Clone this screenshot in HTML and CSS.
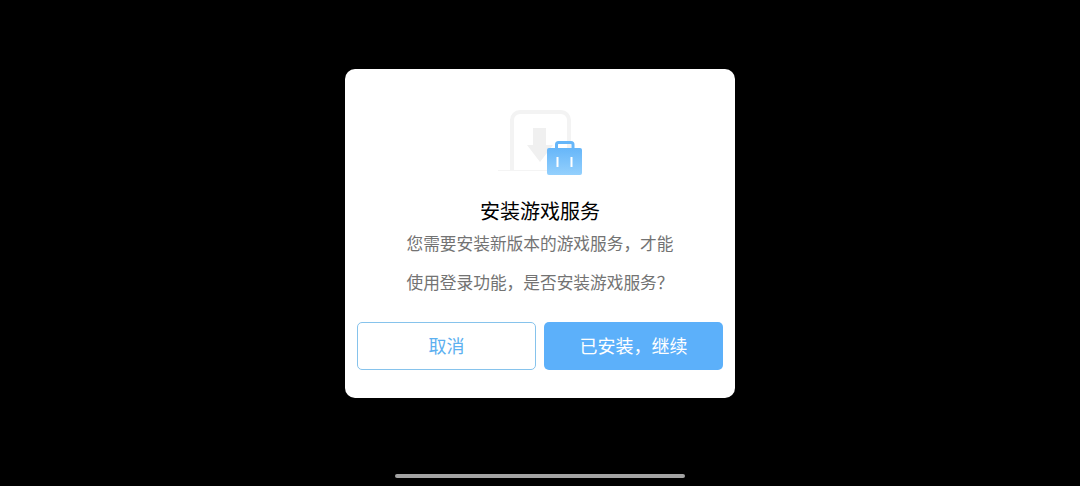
FILE: index.html
```html
<!DOCTYPE html>
<html lang="zh-CN">
<head>
  <meta charset="UTF-8" />
  <title>安装游戏服务</title>
  <link rel="stylesheet" href="styles.css">
</head>
<body>

<div class="dialog">
  <svg class="dialog-icon" width="90" height="66" viewBox="0 0 90 66">
    <defs>
      <linearGradient id="bag-fill" x1="0" y1="0" x2="0" y2="1">
        <stop offset="0" stop-color="#66b6f9" />
        <stop offset="1" stop-color="#94d0fd" />
      </linearGradient>
    </defs>
    <!-- планшет -->
    <path d="M17 60V10a8 8 0 0 1 8-8h41a8 8 0 0 1 8 8v32" fill="none" stroke="#f3f3f3" stroke-width="4" />
    <path d="M3 60.500H53" stroke="#f4f4f4" stroke-width="1" />
    <!-- стрелка -->
    <path d="M38 18H51V35H58L45 52L32 35H38Z" fill="#f0f0f0" />
    <!-- сумка -->
    <path d="M61.500 38V34.500a2 2 0 0 1 2-2H76a2 2 0 0 1 2 2V38" fill="none" stroke="#66b6f9" stroke-width="3" />
    <rect x="52" y="38" width="35" height="27" rx="2" fill="url(#bag-fill)" />
    <path d="M62.500 47V57M76.500 47V57" stroke="#fff" stroke-width="2" />
  </svg>

  <h1 class="dialog-title">安装游戏服务</h1>
  <p class="dialog-text">您需要安装新版本的游戏服务，才能</p>
  <p class="dialog-text">使用登录功能，是否安装游戏服务？</p>

  <div class="dialog-buttons">
    <button class="btn btn-cancel">取消</button>
    <button class="btn btn-confirm">已安装，继续</button>
  </div>
</div>

<div class="home-bar"></div>

</body>
</html>
```

FILE: styles.css
```css
html, body {
  height: 100%;
}

body {
  margin: 0;
  background: #000;
  font-family: "Noto Sans CJK SC", "Noto Sans", sans-serif;
  display: flex;
  flex-direction: column;
  align-items: center;
  overflow: hidden;
}

.dialog {
  box-sizing: border-box;
  width: 390px;
  height: 329px;
  margin-top: 69px;
  padding: 41px 12px 0;
  background: #fff;
  border-radius: 10px;
  display: flex;
  flex-direction: column;
  align-items: center;
}

.dialog-icon {
  display: block;
  flex-shrink: 0;
}

.dialog-title {
  margin: 20px 0 0;
  font-size: 20px;
  line-height: 30px;
  font-weight: 400;
  color: #000;
}

.dialog-text {
  margin: 0;
  height: 39px;
  font-size: 16.7px;
  line-height: 39px;
  color: #737373;
  white-space: nowrap;
}

.dialog-title + .dialog-text {
  margin-top: -2px;
}

.dialog-buttons {
  align-self: stretch;
  display: grid;
  grid-template-columns: 1fr 1fr;
  gap: 8px;
  margin-top: 20px;
}

.btn {
  height: 48px;
  padding: 0 0 2px;
  font-family: inherit;
  font-size: 18px;
  border-radius: 5px;
  box-sizing: border-box;
}

.btn-cancel {
  background: #fff;
  color: #5cb0f0;
  border: 1px solid #86c3ec;
}

.btn-confirm {
  background: #5cb0fa;
  color: #fff;
  border: none;
}

.home-bar {
  width: 290px;
  height: 4px;
  margin-top: 76px;
  border-radius: 2px;
  background: #a3a3a3;
}
```
